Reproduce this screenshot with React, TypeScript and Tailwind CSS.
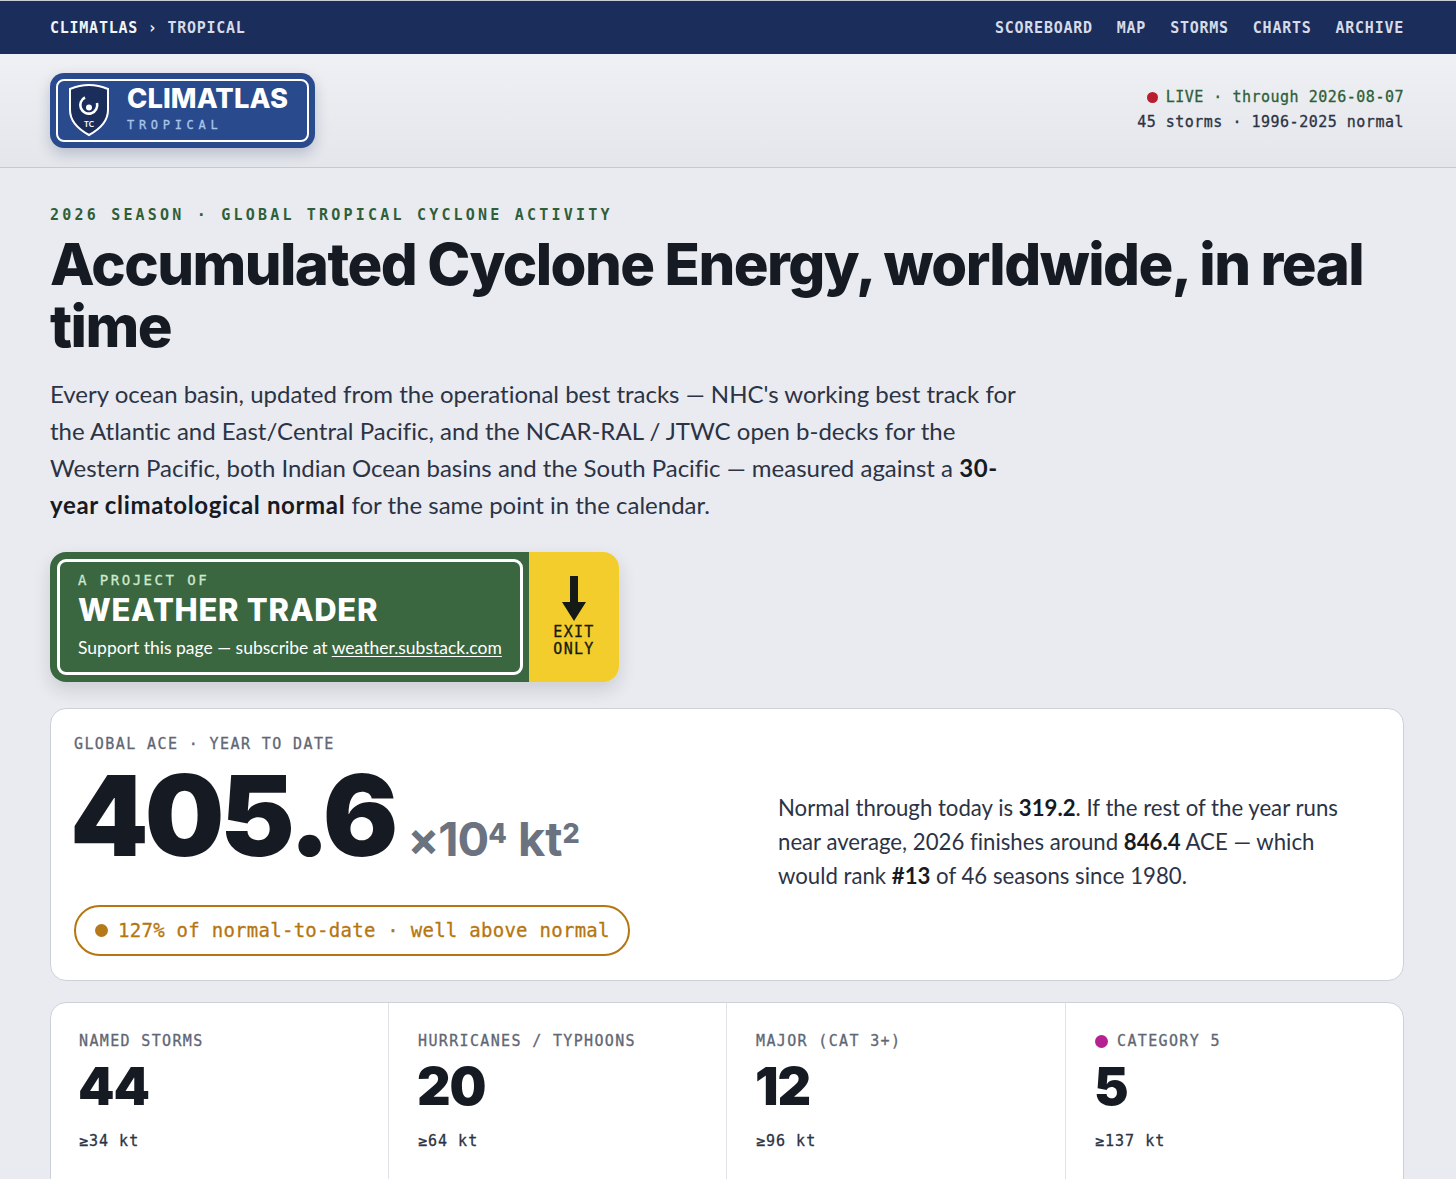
const mono = "font-['DejaVu_Sans_Mono',monospace]";
const sans = "font-['Lato','Noto_Sans',sans-serif]";
const heavy = "font-['Inter',sans-serif]";
const medium = "[-webkit-text-stroke:0.3px_currentColor]";

const stats = [
  { label: "NAMED STORMS", value: "44", sub: "≥34 kt" },
  { label: "HURRICANES / TYPHOONS", value: "20", sub: "≥64 kt" },
  { label: "MAJOR (CAT 3+)", value: "12", sub: "≥96 kt" },
  { label: "CATEGORY 5", value: "5", sub: "≥137 kt", dot: true },
];

function Shield() {
  return (
    <svg width="42" height="54" viewBox="0 0 42 54" className="shrink-0">
      <path d="M21 2 C28 2 34 3.500 40 6 L40 27 C40 38 32 46 21 52 C10 46 2 38 2 27 L2 6 C8 3.500 14 2 21 2 Z" fill="#1b2d5b" stroke="#ffffff" strokeWidth="2" />
      <path d="M17 14.500 A8.500 8.500 0 1 0 29 20" fill="none" stroke="#ffffff" strokeWidth="2.600" />
      <circle cx="21" cy="24.500" r="3" fill="#ffffff" />
      <text x="21" y="44" textAnchor="middle" fill="#ffffff" fontSize="8" fontWeight="700" fontFamily="Lato, sans-serif">TC</text>
    </svg>
  );
}

export default function App() {
  return (
    <div className={`h-[1179px] overflow-hidden bg-[#e9ebf0] text-[#161a22] [font-variant-ligatures:none] ${sans}`}>
      {/* top nav */}
      <nav className={`flex h-[54px] items-center justify-between border-t border-[#c9cdd6] bg-[#1b2d5b] pl-[50px] pr-[52px] pt-[1px] text-[15px] font-bold tracking-[0.75px] ${mono}`}>
        <div className="text-[#f2f4f8]">CLIMATLAS › <span className="text-[#d5dbe8]">TROPICAL</span></div>
        <div className="flex gap-[24px] text-[#d5dbe8]">
          <span>SCOREBOARD</span>
          <span>MAP</span>
          <span>STORMS</span>
          <span>CHARTS</span>
          <span>ARCHIVE</span>
        </div>
      </nav>

      {/* masthead */}
      <header className="flex h-[114px] items-center justify-between border-b border-[#c5c9d2] bg-gradient-to-b from-[#eff0f4] to-[#e4e6eb] pl-[50px] pr-[52px]">
        <div className="mt-[-1px] h-[75px] w-[265px] rounded-[14px] bg-[#2a4a8e] p-[6px] shadow-[0_6px_14px_rgba(27,45,91,0.22)]">
          <div className="flex h-full items-center gap-[17px] rounded-[8px] border-2 border-white pl-[10px]">
            <Shield />
            <div className="mt-[-5px]">
              <div className={`text-[27.300px] font-extrabold leading-[34px] tracking-[0.1px] text-white ${heavy}`}>CLIMATLAS</div>
              <div className={`mt-[1px] text-[12px] leading-[16px] tracking-[4.700px] text-[#a9c4ec] ${medium} ${mono}`}>TROPICAL</div>
            </div>
          </div>
        </div>
        <div className={`mt-[-2px] text-right text-[15px] leading-[25px] tracking-[0.5px] ${medium} ${mono}`}>
          <div className="flex items-center justify-end text-[#2f5f38]">
            <span className="mr-[8px] h-[11px] w-[11px] rounded-full bg-[#b81f2e]" />
            LIVE · through 2026-08-07
          </div>
          <div className="text-[#2c3345]">45 storms · 1996-2025 normal</div>
        </div>
      </header>

      <main className="pl-[50px] pr-[52px] pt-[37px]">
        <div className={`text-[15px] font-bold leading-[20px] tracking-[3.2px] text-[#2f5f38] ${mono}`}>2026 SEASON · GLOBAL TROPICAL CYCLONE ACTIVITY</div>
        <h1 className={`mt-[8px] text-[58px] font-extrabold leading-[62px] tracking-[-1.550px] ${heavy}`}>Accumulated Cyclone Energy, worldwide, in real time</h1>
        <p className="mt-[18px] w-[985px] text-[24px] leading-[37px] text-[#2c3345]">
          Every ocean basin, updated from the operational best tracks — NHC's working best track for the Atlantic and East/Central Pacific, and the NCAR-RAL / JTWC open b-decks for the Western Pacific, both Indian Ocean basins and the South Pacific — measured against a <strong className="font-bold tracking-[0.65px] text-[#161a22]">30-year climatological normal</strong> for the same point in the calendar.
        </p>

        {/* sign */}
        <div className="mt-[29px] flex h-[130px] w-[569px] overflow-hidden rounded-[16px] shadow-[0_8px_18px_rgba(22,26,34,0.14)]">
          <div className="flex-1 bg-[#3a6640] py-[7px] pl-[7px] pr-[6px]">
            <div className="h-full rounded-[9px] border-[3px] border-white pl-[18px] pt-[9px]">
              <div className={`text-[14px] leading-[18px] tracking-[2.5px] text-[#cfe8cf] ${medium} ${mono}`}>A PROJECT OF</div>
              <div className={`mt-[2px] text-[31px] font-extrabold leading-[38px] tracking-[0.7px] text-white ${heavy}`}>WEATHER TRADER</div>
              <div className="mt-[7px] text-[17.500px] leading-[24px] text-white">
                Support this page — subscribe at <span className="underline underline-offset-2">weather.substack.com</span>
              </div>
            </div>
          </div>
          <div className="flex w-[90px] flex-col items-center bg-[#f2cd2b] pt-[24px]">
            <svg width="24" height="46" viewBox="0 0 24 46">
              <path d="M8 0 H16 V26 H24 L12 45 L0 26 H8 Z" fill="#161a16" />
            </svg>
            <div className={`mt-[2px] text-center text-[15px] leading-[17px] tracking-[1.3px] text-[#161a16] ${medium} ${mono}`}>EXIT<br />ONLY</div>
          </div>
        </div>

        {/* ACE card */}
        <section className="mt-[26px] grid h-[273px] grid-cols-[704px_1fr] rounded-[16px] border border-[#ccd0d9] bg-white pl-[23px] pr-[24px] pt-[26px]">
          <div>
            <div className={`text-[15px] leading-[18px] tracking-[1.4px] text-[#5f6775] ${medium} ${mono}`}>GLOBAL ACE · YEAR TO DATE</div>
            <div className="ml-[-4px] flex items-baseline">
              <span className={`text-[112px] font-black leading-[124px] tracking-[-4px] ${heavy}`}>405.6</span>
              <span className={`ml-[13px] text-[47px] font-bold leading-none text-[#6b7280] ${heavy}`}>
                <span className="tracking-[-1px]">×10</span><sup className="text-[27px] font-extrabold">4</sup> kt<sup className="text-[27px] font-extrabold">2</sup>
              </span>
            </div>
            <div className={`mt-[28px] flex h-[51px] w-[556px] items-center rounded-full border-2 border-[#b5760f] pl-[19px] text-[19px] tracking-[0.27px] text-[#b5760f] ${medium} ${mono}`}>
              <span className="mr-[10px] h-[13px] w-[13px] rounded-full bg-[#b5791a]" />
              127% of normal-to-date · well above normal
            </div>
          </div>
          <div className="w-[570px] pt-[56px] text-[22.200px] leading-[34px] text-[#2c3345]">
            Normal through today is <strong className="font-bold text-[#161a22]">319.2</strong>. If the rest of the year runs near average, 2026 finishes around <strong className="font-bold text-[#161a22]">846.4</strong> ACE — which would rank <strong className="font-bold text-[#161a22]">#13</strong> of 46 seasons since 1980.
          </div>
        </section>

        {/* stat tiles */}
        <section className="mt-[21px] grid h-[200px] grid-cols-[337px_338px_339px_1fr] rounded-[16px] border border-[#ccd0d9] bg-white">
          {stats.map((s, i) => (
            <div key={s.label} className={`pt-[29px] ${i > 0 ? "border-l border-[#dfe2e8] pl-[29px]" : "pl-[28px]"}`}>
              <div className={`flex items-center text-[15px] leading-[18px] tracking-[1.35px] text-[#5f6775] ${medium} ${mono}`}>
                {s.dot && <span className="mr-[9px] h-[13px] w-[13px] rounded-full bg-[#b5218f]" />}
                {s.label}
              </div>
              <div className={`ml-[-1px] mt-[7px] text-[52px] font-black leading-[60px] tracking-[-1px] ${heavy}`}>{s.value}</div>
              <div className={`mt-[14px] text-[15px] leading-[20px] tracking-[1px] text-[#2c3345] ${medium} ${mono}`}>{s.sub}</div>
            </div>
          ))}
        </section>
      </main>
    </div>
  );
}
